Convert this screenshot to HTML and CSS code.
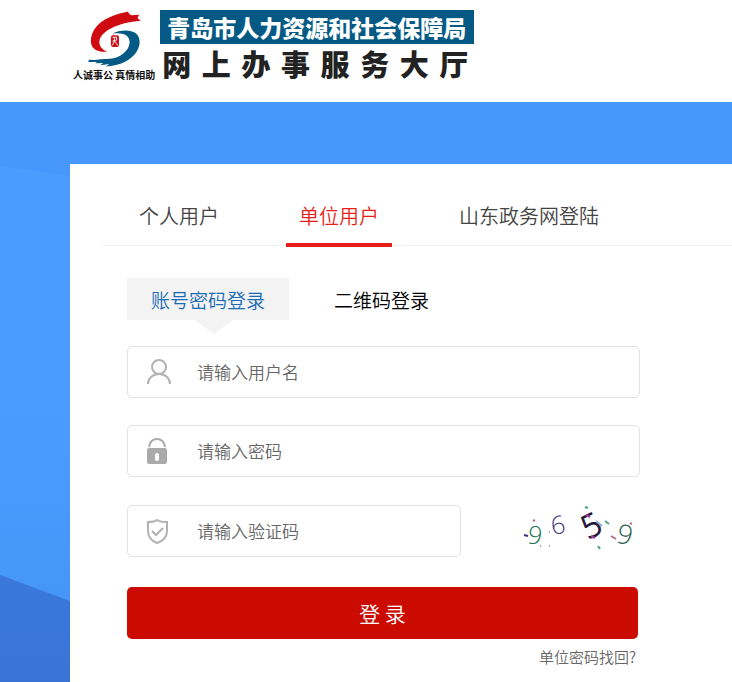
FILE: index.html
```
<!DOCTYPE html>
<html lang="zh-CN">
<head>
    <meta charset="UTF-8">
    <meta name="viewport" content="width=device-width, initial-scale=1.0">
    <title>网上办事服务大厅</title>
    <link rel="stylesheet" href="styles.css">
</head>
<body>
    <header class="header">
        <div class="logo">
            <svg class="emblem" viewBox="75 28 175 180" aria-hidden="true">
                <path fill="#cf0a10" d="M246 61L236 52L241 42L216 44L210 39L206 33C165 39 120 58 101 88C88 109 86 134 99 147C108 156 123 159 142 158C126 151 115 140 117 124C121 95 174 66 246 61Z"/>
                <path fill="#045a84" d="M158 101C181 88 219 87 234 103C246 116 245 139 234 156C217 184 182 201 137 204L148 196L119 200L129 193L104 194L109 190L82 190L84 183L102 184L120 181L150 180C181 177 207 157 211 132C214 109 195 96 158 101Z"/>
                <rect x="153" y="106" width="25" height="37" rx="7" fill="#cf0a10"/>
                <path d="M158 113L170 112L171 121L158 125M164 114L163 127L157 138M165 125L174 138" fill="none" stroke="#fff" stroke-width="3"/>
            </svg>
            <p class="slogan">人诚事公 真情相助</p>
        </div>
        <div class="titles">
            <p class="bureau">青岛市人力资源和社会保障局</p>
            <h1>网上办事服务大厅</h1>
        </div>
    </header>

    <main class="main">
        <svg class="backdrop" viewBox="0 0 732 580" preserveAspectRatio="xMinYMin slice" aria-hidden="true">
            <polygon points="0,64 732,168 732,580 0,580" fill="#4a9dff"/>
            <polygon points="0,300 732,300 732,580 0,580" fill="url(#fade)"/>
            <polygon points="0,473 732,745 732,580 0,580" fill="url(#deep)"/>
            <defs>
                <linearGradient id="fade" x1="0" y1="0" x2="0" y2="1">
                    <stop offset="0" stop-color="#4a9dff"/>
                    <stop offset="1" stop-color="#4493f4"/>
                </linearGradient>
                <linearGradient id="deep" x1="0" y1="0" x2="0" y2="1">
                    <stop offset="0" stop-color="#3a78dc"/>
                    <stop offset="1" stop-color="#366fce"/>
                </linearGradient>
            </defs>
        </svg>

        <section class="card">
            <nav class="tabs">
                <a href="#personal">个人用户</a>
                <a href="#company" class="active">单位用户</a>
                <a href="#gov">山东政务网登陆</a>
            </nav>

            <form class="form">
                <div class="modes">
                    <button type="button" class="mode active">账号密码登录</button>
                    <button type="button" class="mode">二维码登录</button>
                </div>

                <div class="field">
                    <label for="username" aria-label="用户名">
                        <svg width="26" height="26" viewBox="0 0 26 26" fill="none" stroke="#b2b2b2" stroke-width="2">
                            <circle cx="13" cy="8" r="7"/>
                            <path d="M2 25C2 19 7 15 13 15S24 19 24 25"/>
                        </svg>
                    </label>
                    <input type="text" id="username" placeholder="请输入用户名">
                </div>

                <div class="field">
                    <label for="password" aria-label="密码">
                        <svg width="26" height="26" viewBox="0 0 26 26">
                            <path d="M3 9C4 3 7 1 11 1S18 3 19 9" fill="none" stroke="#aaa" stroke-width="2"/>
                            <rect x="1" y="10" width="20" height="16" rx="2" fill="#aaa"/>
                            <rect x="9" y="15" width="4" height="8" rx="2" fill="#fff"/>
                        </svg>
                    </label>
                    <input type="password" id="password" placeholder="请输入密码">
                </div>

                <div class="row">
                    <div class="field">
                        <label for="code" aria-label="验证码">
                            <svg width="26" height="26" viewBox="0 0 26 26" fill="none" stroke="#b2b2b2" stroke-width="2">
                                <path d="M11 2C9 4 6 4 2 4V13C2 19 6 23 11 25C17 23 21 19 21 13V4C17 4 14 4 11 2Z"/>
                                <path d="M6 13L10 17L17 10"/>
                            </svg>
                        </label>
                        <input type="text" id="code" placeholder="请输入验证码">
                    </div>
                    <button type="button" class="captcha" aria-label="换一张验证码">
                        <svg width="120" height="52" viewBox="0 0 120 52">
                            <g text-anchor="middle">
                                <text x="15" y="39" font-size="25" fill="#197552" transform="rotate(8 15 30)">9</text>
                                <text x="38" y="29" font-size="25" fill="#43357f" transform="rotate(-10 38 20)">6</text>
                                <text x="71" y="32" font-size="32" fill="#211538" stroke="#211538" transform="rotate(-26 71 20)">5</text>
                                <text x="105" y="39" font-size="27" fill="#2b5b4c" transform="rotate(12 105 30)">9</text>
                            </g>
                            <g fill="none" stroke-width="2">
                                <path d="M4 30L8 31" stroke="#43357f"/>
                                <path d="M13 15L15 16M91 31L96 34M110 18L112 19" stroke="#b5707c"/>
                                <path d="M65 2L68 3M85 16L89 19M78 41L80 44" stroke="#4ba57c"/>
                                <path d="M76 16L82 21" stroke="#8cabc8"/>
                                <path d="M66 10L70 12M71 31L75 33" stroke="#a43ba0"/>
                                <path d="M29 27H30M20 41H21M29 41H30" stroke="#9ab"/>
                            </g>
                        </svg>
                    </button>
                </div>

                <button type="submit" class="submit">登 录</button>
                <a href="#forgot" class="forgot">单位密码找回?</a>
            </form>
        </section>
    </main>
</body>
</html>
```
FILE: styles.css
```
* {
    box-sizing: border-box;
}
body {
    margin: 0;
    min-height: 100vh;
    display: flex;
    flex-direction: column;
    font-family: 'Noto Sans CJK SC', sans-serif;
    font-weight: 350;
    background: #fff;
}
p, h1 {
    margin: 0;
}
a {
    text-decoration: none;
}
button, input {
    font-family: inherit;
    font-weight: inherit;
}

/* Header */
.header {
    display: flex;
    gap: 5px;
    padding: 10px 20px 20px 73px;
}
.logo {
    display: flex;
    flex-direction: column;
    align-items: center;
}
.emblem {
    width: 56px;
    height: 58px;
}
.slogan {
    font-size: 10px;
    line-height: 14px;
    font-weight: 700;
    white-space: nowrap;
    color: #111;
}
.bureau {
    padding: 0 8px 0 7px;
    font-size: 23px;
    line-height: 34px;
    font-weight: 900;
    color: #fff;
    background: #045a84;
}
h1 {
    padding: 0 6px 0 2px;
    font-size: 29px;
    line-height: 38px;
    font-weight: 900;
    color: #222;
    text-align-last: justify;
}

/* Login area */
.main {
    position: relative;
    flex: 1;
    padding: 62px 0 0 70px;
    display: flex;
    background: #4797fd;
}
.backdrop {
    position: absolute;
    inset: 0;
    width: 100%;
    height: 100%;
}
.card {
    position: relative;
    flex: 1;
    padding: 32px 0 12px 32px;
    background: #fff;
}
.tabs {
    display: flex;
    gap: 54px;
    padding-left: 24px;
    border-bottom: 1px solid #f2f2f2;
}
.tabs a {
    padding: 0 13px 7px;
    margin-bottom: -2px;
    border-bottom: 4px solid transparent;
    font-size: 20px;
    line-height: 40px;
    color: #444;
}
.tabs a.active {
    color: #e71f19;
    border-bottom-color: #e71f19;
}
.form {
    max-width: 562px;
    padding: 32px 24px 0 25px;
    display: flex;
    flex-direction: column;
}
.modes {
    display: flex;
    gap: 21px;
    margin-bottom: 26px;
}
.mode {
    position: relative;
    height: 42px;
    padding: 0 24px;
    border: none;
    font-size: 19px;
    color: #000;
    background: none;
    cursor: pointer;
}
.mode.active {
    color: #1a6bb5;
    background: #f3f3f3;
}
.mode.active::after {
    content: "";
    position: absolute;
    top: 100%;
    left: 68px;
    border: 19px solid transparent;
    border-top: 14px solid #f3f3f3;
    border-bottom: none;
}
.field {
    flex: 1;
    display: flex;
    align-items: center;
    height: 52px;
    padding-left: 18px;
    border: 1px solid #e3e3e3;
    border-radius: 5px;
}
.form > .field {
    flex: none;
    margin-bottom: 27px;
}
.field label {
    display: flex;
}
.field input {
    flex: 1;
    min-width: 0;
    height: 48px;
    padding: 0 10px 2px 25px;
    border: none;
    outline: none;
    font-size: 17px;
    background: none;
}
.field input::placeholder {
    color: #666;
}
.row {
    display: flex;
    gap: 59px;
    padding: 1px 0 30px;
}
.captcha {
    height: 52px;
    padding: 0;
    border: none;
    background: none;
    cursor: pointer;
    font-family: 'Open Sans', sans-serif;
}
.captcha svg {
    overflow: visible;
}
.submit {
    height: 52px;
    margin-right: 2px;
    border: none;
    border-radius: 5px;
    font-size: 21px;
    color: #fff;
    background: #cb0a00;
    cursor: pointer;
}
.forgot {
    align-self: flex-end;
    margin-top: 6px;
    padding-right: 4px;
    font-size: 15px;
    line-height: 24px;
    color: #666;
}
```
